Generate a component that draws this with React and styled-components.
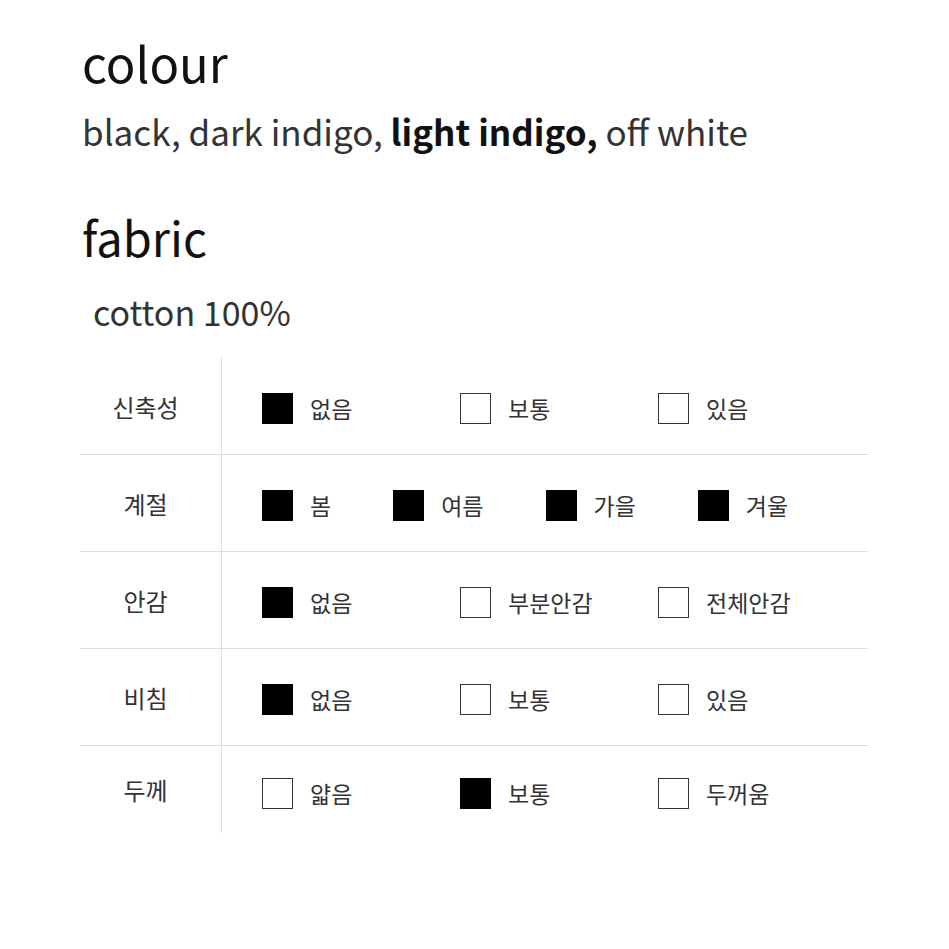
import React from 'react';
import styled, { createGlobalStyle } from 'styled-components';

const GlobalStyle = createGlobalStyle`
  body {
    margin: 0;
    background: #fff;
    font-family: "Noto Sans CJK KR", "Noto Sans", sans-serif;
  }
`;

const ROWS = [
  { label: '신축성', cols: true, options: [['없음', true], ['보통', false], ['있음', false]] },
  { label: '계절', cols: false, options: [['봄', true], ['여름', true], ['가을', true], ['겨울', true]] },
  { label: '안감', cols: true, options: [['없음', true], ['부분안감', false], ['전체안감', false]] },
  { label: '비침', cols: true, options: [['없음', true], ['보통', false], ['있음', false]] },
  { label: '두께', cols: true, options: [['얇음', false], ['보통', true], ['두꺼움', false]] },
];

const App = () => (
  <Page>
    <GlobalStyle />
    <Heading>colour</Heading>
    <Colours>
      black, dark indigo, <b>light indigo,</b> off white
    </Colours>
    <Heading $fabric>fabric</Heading>
    <Fabric>cotton 100%</Fabric>
    <Table>
      {ROWS.map((row, i) => (
        <Row key={row.label} $last={i === ROWS.length - 1}>
          <Label>{row.label}</Label>
          <Options $last={i === ROWS.length - 1}>
            {row.options.map(([text, checked]) => (
              <Option key={text} $cols={row.cols}>
                <Box $checked={checked} />
                <OptionText>{text}</OptionText>
              </Option>
            ))}
          </Options>
        </Row>
      ))}
    </Table>
  </Page>
);

const Page = styled.div`
  padding: 30px 0 0 80px;
  width: 788px;
`;
const Heading = styled.h2`
  margin: ${(p) => (p.$fabric ? '50px 0 0 2px' : '0 0 0 2px')};
  font-size: ${(p) => (p.$fabric ? '47px' : '49px')};
  font-weight: 400;
  line-height: 64px;
  color: #111;
`;
const Colours = styled.p`
  margin: 13px 0 0 2px;
  font-size: 35px;
  line-height: 48px;
  color: #333;
  b {
    font-weight: 700;
    color: #111;
  }
`;
const Fabric = styled.p`
  margin: 21px 0 0 13px;
  font-size: 34px;
  line-height: 44px;
  color: #333;
`;
const Table = styled.div`
  margin-top: 24px;
`;
const Row = styled.div`
  display: flex;
  border-bottom: ${(p) => (p.$last ? 'none' : '1px solid #ddd')};
`;
const Label = styled.div`
  width: 142px;
  box-sizing: border-box;
  padding-right: 10px;
  border-right: 1px solid #ddd;
  display: flex;
  align-items: center;
  justify-content: center;
  font-size: 24px;
  color: #333;
`;
const Options = styled.div`
  flex: 1;
  display: flex;
  align-items: center;
  padding: ${(p) => (p.$last ? '32px 0 24px 40px' : '35px 0 30px 40px')};
`;
const Option = styled.div`
  display: flex;
  align-items: center;
  height: 31px;
  width: ${(p) => (p.$cols ? '198px' : 'auto')};
  margin-right: ${(p) => (p.$cols ? '0' : '62px')};
`;
const Box = styled.span`
  box-sizing: border-box;
  width: 31px;
  height: 31px;
  background: ${(p) => (p.$checked ? '#000' : '#fff')};
  border: 1.5px solid ${(p) => (p.$checked ? '#000' : '#333')};
`;
const OptionText = styled.span`
  margin-left: 17px;
  font-size: 23px;
  line-height: 31px;
  color: #333;
`;

export default App;
